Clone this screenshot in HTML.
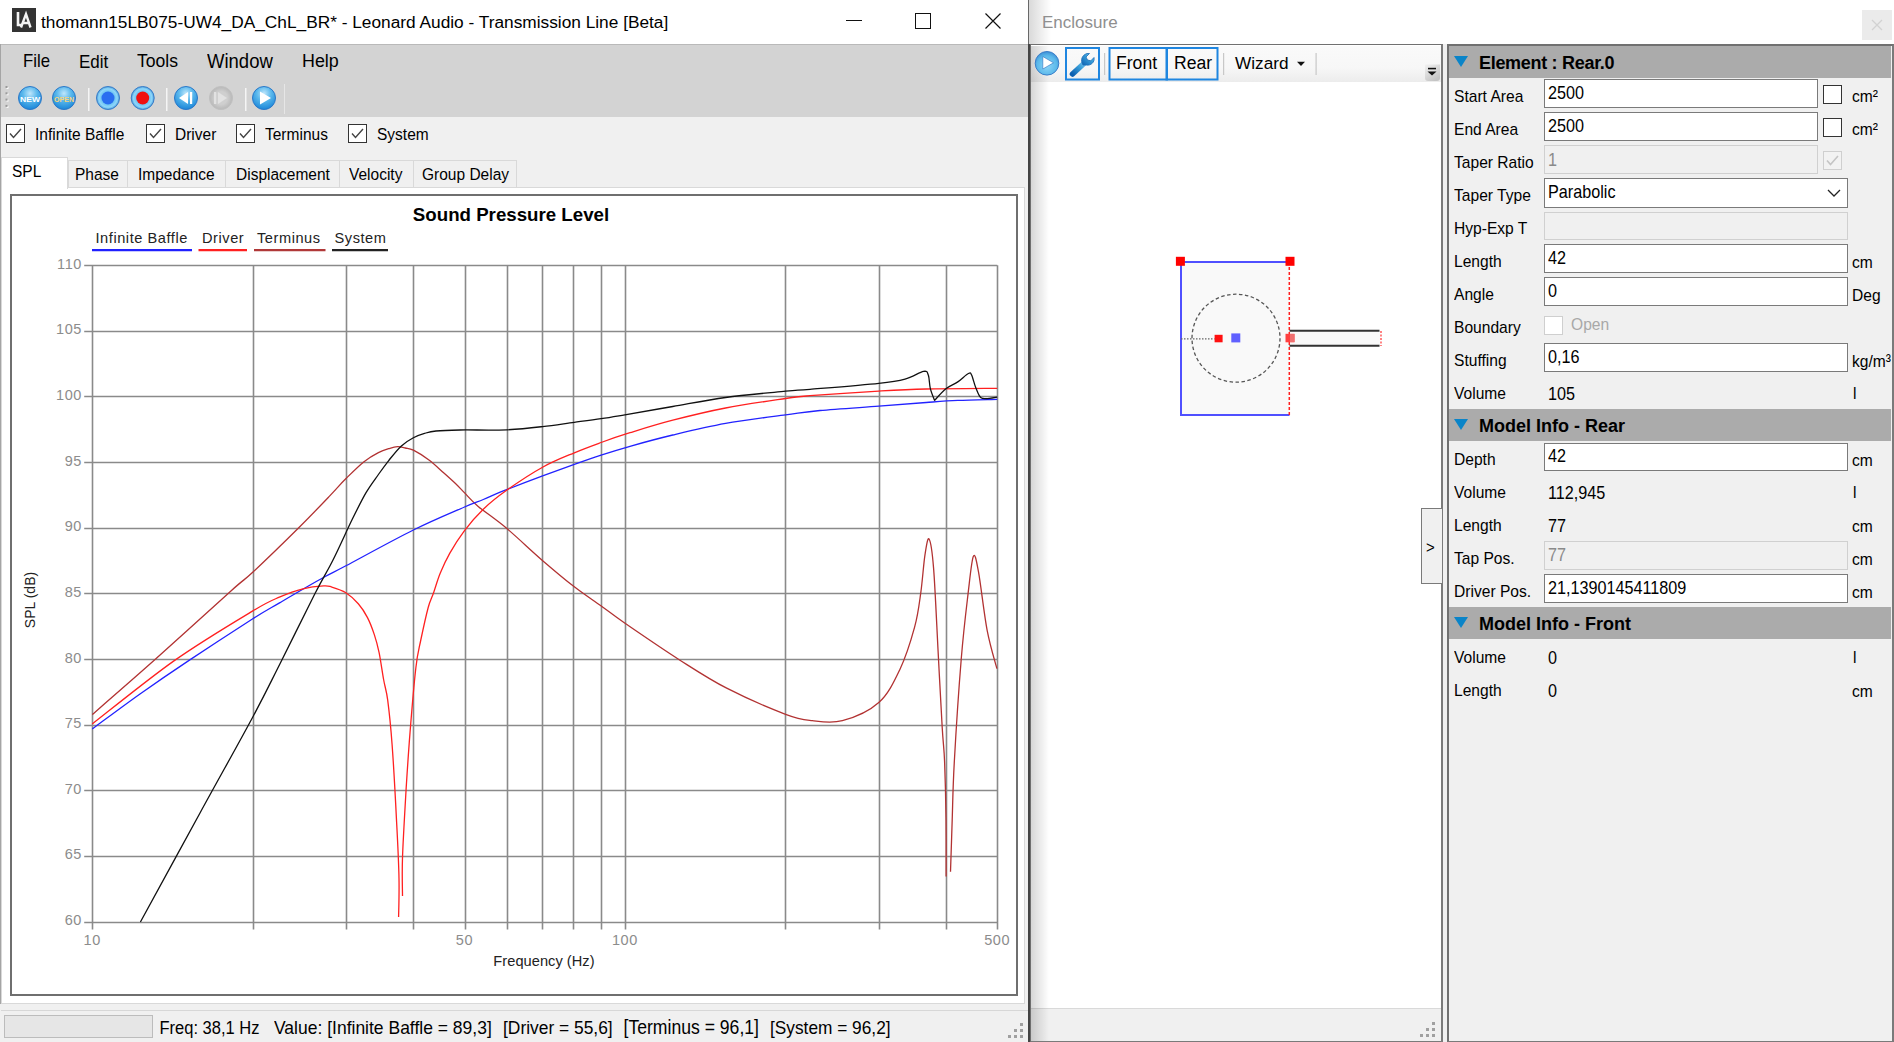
<!DOCTYPE html>
<html><head><meta charset="utf-8">
<style>
*{box-sizing:border-box;margin:0;padding:0}
html,body{width:1894px;height:1042px;overflow:hidden;background:#f0f0f0;font-family:"Liberation Sans",sans-serif;color:#000}
.a{position:absolute}
.t{position:absolute;white-space:pre;line-height:1}
.ui{font-size:15.5px;transform:scaleY(1.1);transform-origin:0 2px}
.sy{transform:scaleY(1.1);transform-origin:0 2px}
.cb{position:absolute;width:19px;height:19px;border:1.7px solid #333;background:#fff}
.cb svg{position:absolute;left:1px;top:1px}
.inp{position:absolute;background:#fff;border:1.5px solid #7a7a7a}
.dis{position:absolute;background:#f0f0f0;border:1.5px solid #d0d0d0}
.hdr{position:absolute;left:1449px;width:442px;height:32px;background:#ababab}
.hdr .tri{position:absolute;left:5px;top:10px;width:0;height:0;border-left:7.5px solid transparent;border-right:7.5px solid transparent;border-top:11px solid #0a84c8}
.hdr .ht{position:absolute;left:30px;top:8px;font-weight:bold;font-size:18px;white-space:pre;line-height:1}
.lbl{position:absolute;left:1454px;font-size:15.6px;white-space:pre;line-height:1;transform:scaleY(1.1);transform-origin:0 2px}
.unit{position:absolute;left:1852px;font-size:15.6px;white-space:pre;line-height:1;transform:scaleY(1.1);transform-origin:0 2px}
.val{position:absolute;left:1548px;font-size:16.2px;white-space:pre;line-height:1;transform:scaleY(1.1);transform-origin:0 2px}
</style></head><body>

<!-- ================= LEFT WINDOW ================= -->
<div class="a" style="left:0;top:0;width:1028px;height:44px;background:#fff"></div>
<div class="a" style="left:12px;top:8px;width:24px;height:24px;background:#333"></div>
<svg class="a" style="left:12px;top:8px" width="24" height="24"><path d="M6,4 L6,17 L10,17" stroke="#f4f4f4" stroke-width="2.6" fill="none"/><path d="M9,19.5 L14,6 L18.5,19.5 M11,15 L17,15" stroke="#f4f4f4" stroke-width="2.4" fill="none"/></svg>
<div class="t" style="left:41px;top:13.5px;font-size:17.3px">thomann15LB075-UW4_DA_ChL_BR* - Leonard Audio - Transmission Line [Beta]</div>
<div class="a" style="left:846px;top:20px;width:16px;height:1px;background:#111"></div>
<div class="a" style="left:915px;top:13px;width:16px;height:16px;border:1px solid #111"></div>
<svg class="a" style="left:984px;top:12px" width="18" height="18"><path d="M1.5,1.5 L16.5,16.5 M16.5,1.5 L1.5,16.5" stroke="#111" stroke-width="1.2"/></svg>

<!-- menu/toolbar -->
<div class="a" style="left:0;top:44px;width:1028px;height:73px;background:#d3d3d3;border-top:1px solid #b9b9b9"></div>
<div class="a" style="left:0;top:44px;width:1px;height:960px;background:#a5a5a5"></div>
<div class="t" style="left:23px;top:54.0px;font-size:16.8px;transform:scaleY(1.06);transform-origin:0 14.3px">File</div>
<div class="t" style="left:79px;top:53.8px;font-size:17.0px;transform:scaleY(1.06);transform-origin:0 14.4px">Edit</div>
<div class="t" style="left:137px;top:53.3px;font-size:17.6px;transform:scaleY(1.06);transform-origin:0 15.0px">Tools</div>
<div class="t" style="left:207px;top:52.5px;font-size:18.5px;transform:scaleY(1.06);transform-origin:0 15.7px">Window</div>
<div class="t" style="left:302px;top:53.0px;font-size:17.9px;transform:scaleY(1.06);transform-origin:0 15.2px">Help</div>

<svg class="a" style="left:0;top:80px" width="300" height="36">
 <defs>
  <radialGradient id="gb" cx="50%" cy="30%" r="70%"><stop offset="0" stop-color="#bfe6fb"/><stop offset="0.45" stop-color="#5ab8ec"/><stop offset="1" stop-color="#1a86d8"/></radialGradient>
  <radialGradient id="gr" cx="50%" cy="50%" r="50%"><stop offset="0.55" stop-color="#6cc4f2"/><stop offset="0.8" stop-color="#8fd6fa"/><stop offset="1" stop-color="#4aa0dc"/></radialGradient>
  <radialGradient id="gg" cx="50%" cy="50%" r="50%"><stop offset="0.55" stop-color="#cfcfcf"/><stop offset="1" stop-color="#b8b8b8"/></radialGradient>
 </defs>
 <g fill="#fbfbfb"><rect x="6.5" y="7" width="2" height="2"/><rect x="6.5" y="13.3" width="2" height="2"/><rect x="6.5" y="19.6" width="2" height="2"/><rect x="6.5" y="25.9" width="2" height="2"/></g><g fill="#9a9a9a"><rect x="5.5" y="6" width="2" height="2"/><rect x="5.5" y="12.3" width="2" height="2"/><rect x="5.5" y="18.6" width="2" height="2"/><rect x="5.5" y="24.9" width="2" height="2"/></g>
 <circle cx="30" cy="18" r="11.5" fill="url(#gb)" stroke="#2b78c8" stroke-width="1"/>
 <text x="30" y="21.5" font-size="8" font-weight="bold" textLength="20" lengthAdjust="spacingAndGlyphs" fill="#fff" text-anchor="middle" font-family="Liberation Sans">NEW</text>
 <circle cx="64" cy="18" r="11.5" fill="url(#gb)" stroke="#2b78c8" stroke-width="1"/>
 <text x="64" y="21.5" font-size="8" font-weight="bold" textLength="20" lengthAdjust="spacingAndGlyphs" fill="#f6d27a" text-anchor="middle" font-family="Liberation Sans">OPEN</text>
 <rect x="88" y="8" width="1.5" height="23" fill="#f5f5f5"/>
 <circle cx="108" cy="18" r="11.5" fill="url(#gr)" stroke="#3a7cc8" stroke-width="1"/>
 <circle cx="108" cy="18" r="6.5" fill="#2a6ef0"/>
 <circle cx="142.7" cy="18" r="11.5" fill="url(#gr)" stroke="#3a7cc8" stroke-width="1"/>
 <circle cx="142.7" cy="18" r="6.5" fill="#f01010"/>
 <rect x="166" y="8" width="1.5" height="23" fill="#f5f5f5"/>
 <circle cx="186" cy="18" r="11.5" fill="url(#gb)" stroke="#2b78c8" stroke-width="1"/>
 <path d="M179,18 L188,12 L188,24 Z" fill="#fff"/><rect x="190" y="12" width="2.2" height="12" fill="#fff"/>
 <circle cx="221" cy="18" r="11.5" fill="url(#gg)" stroke="#c0c0c0" stroke-width="1"/>
 <rect x="214" y="12" width="2.2" height="12" fill="#e2e2e2"/><path d="M218,12 L227,18 L218,24 Z" fill="#e2e2e2"/>
 <rect x="245" y="8" width="1.5" height="23" fill="#f5f5f5"/>
 <circle cx="264" cy="18" r="11.5" fill="url(#gb)" stroke="#2b78c8" stroke-width="1"/>
 <path d="M260,11.5 L271,18 L260,24.5 Z" fill="#fff"/>
 <rect x="284" y="4" width="1" height="30" fill="#e6e6e6"/>
</svg>

<!-- checkbox row -->
<div class="cb" style="left:6px;top:124px"><svg width="15" height="15"><path d="M2,7.5 L5.5,11.5 L13,3" stroke="#444" stroke-width="1.4" fill="none"/></svg></div>
<div class="t ui" style="left:35px;top:126px">Infinite Baffle</div>
<div class="cb" style="left:146px;top:124px"><svg width="15" height="15"><path d="M2,7.5 L5.5,11.5 L13,3" stroke="#444" stroke-width="1.4" fill="none"/></svg></div>
<div class="t ui" style="left:175px;top:126px">Driver</div>
<div class="cb" style="left:236px;top:124px"><svg width="15" height="15"><path d="M2,7.5 L5.5,11.5 L13,3" stroke="#444" stroke-width="1.4" fill="none"/></svg></div>
<div class="t ui" style="left:265px;top:126px">Terminus</div>
<div class="cb" style="left:348px;top:124px"><svg width="15" height="15"><path d="M2,7.5 L5.5,11.5 L13,3" stroke="#444" stroke-width="1.4" fill="none"/></svg></div>
<div class="t ui" style="left:377px;top:126px">System</div>

<!-- tabs -->
<div class="a" style="left:68px;top:160px;width:449px;height:28px;background:#f0f0f0;border:1px solid #d9d9d9;border-bottom:none"></div>
<div class="a" style="left:127px;top:161px;width:1px;height:27px;background:#d9d9d9"></div>
<div class="a" style="left:225px;top:161px;width:1px;height:27px;background:#d9d9d9"></div>
<div class="a" style="left:339px;top:161px;width:1px;height:27px;background:#d9d9d9"></div>
<div class="a" style="left:413px;top:161px;width:1px;height:27px;background:#d9d9d9"></div>
<div class="a" style="left:1px;top:187px;width:1024px;height:817px;background:#fff;border:1px solid #d9d9d9"></div>
<div class="a" style="left:1px;top:157px;width:67px;height:32px;background:#fff;border:1px solid #d9d9d9;border-bottom:none"></div>
<div class="t ui" style="left:12px;top:163px">SPL</div>
<div class="t ui" style="left:75px;top:165.5px">Phase</div>
<div class="t ui" style="left:138px;top:165.5px">Impedance</div>
<div class="t ui" style="left:236px;top:165.5px">Displacement</div>
<div class="t ui" style="left:349px;top:165.5px">Velocity</div>
<div class="t ui" style="left:422px;top:165.5px">Group Delay</div>

<!-- chart -->
<div class="a" style="left:10px;top:194px;width:1008px;height:802px;border:2px solid #6f6f6f;background:#fff"></div>
<svg class="a" style="left:0;top:0" width="1028" height="1004">
<text x="511" y="220.8" font-family="Liberation Sans" font-weight="bold" font-size="18.7" text-anchor="middle">Sound Pressure Level</text>
<g font-family="Liberation Sans" font-size="14.6" fill="#222" letter-spacing="0.55">
<text x="95.5" y="242.5">Infinite Baffle</text>
<text x="202" y="242.5">Driver</text>
<text x="257" y="242.5">Terminus</text>
<text x="334.5" y="242.5">System</text>
</g>
<g stroke-width="2.2">
<line x1="92" y1="250.2" x2="192" y2="250.2" stroke="#2020ff"/>
<line x1="198.5" y1="250.2" x2="247" y2="250.2" stroke="#ff2020"/>
<line x1="254" y1="250.2" x2="325.5" y2="250.2" stroke="#b03838"/>
<line x1="332" y1="250.2" x2="388" y2="250.2" stroke="#222"/>
</g>
<g stroke="#8a8a8a" stroke-width="1.6" fill="none"><line x1="92.5" y1="265.2" x2="92.5" y2="929.5" /><line x1="253.5" y1="265.2" x2="253.5" y2="929.5" /><line x1="346.5" y1="265.2" x2="346.5" y2="929.5" /><line x1="413.5" y1="265.2" x2="413.5" y2="929.5" /><line x1="465.5" y1="265.2" x2="465.5" y2="929.5" /><line x1="507.5" y1="265.2" x2="507.5" y2="929.5" /><line x1="542.5" y1="265.2" x2="542.5" y2="929.5" /><line x1="573.5" y1="265.2" x2="573.5" y2="929.5" /><line x1="601.5" y1="265.2" x2="601.5" y2="929.5" /><line x1="625.5" y1="265.2" x2="625.5" y2="929.5" /><line x1="785.5" y1="265.2" x2="785.5" y2="929.5" /><line x1="879.5" y1="265.2" x2="879.5" y2="929.5" /><line x1="946.5" y1="265.2" x2="946.5" y2="929.5" /><line x1="997.5" y1="265.2" x2="997.5" y2="929.5" /><line x1="84.2" y1="922.5" x2="997.2413213097973" y2="922.5" /><line x1="84.2" y1="856.5" x2="997.2413213097973" y2="856.5" /><line x1="84.2" y1="790.5" x2="997.2413213097973" y2="790.5" /><line x1="84.2" y1="725.5" x2="997.2413213097973" y2="725.5" /><line x1="84.2" y1="659.5" x2="997.2413213097973" y2="659.5" /><line x1="84.2" y1="593.5" x2="997.2413213097973" y2="593.5" /><line x1="84.2" y1="528.5" x2="997.2413213097973" y2="528.5" /><line x1="84.2" y1="462.5" x2="997.2413213097973" y2="462.5" /><line x1="84.2" y1="396.5" x2="997.2413213097973" y2="396.5" /><line x1="84.2" y1="331.5" x2="997.2413213097973" y2="331.5" /><line x1="84.2" y1="265.5" x2="997.2413213097973" y2="265.5" /></g><g font-family="Liberation Sans" font-size="14.5" fill="#8c8c8c" letter-spacing="0.6"><text x="82" y="925.0" text-anchor="end">60</text><text x="82" y="859.4" text-anchor="end">65</text><text x="82" y="793.7" text-anchor="end">70</text><text x="82" y="728.1" text-anchor="end">75</text><text x="82" y="662.5" text-anchor="end">80</text><text x="82" y="596.8" text-anchor="end">85</text><text x="82" y="531.2" text-anchor="end">90</text><text x="82" y="465.6" text-anchor="end">95</text><text x="82" y="400.0" text-anchor="end">100</text><text x="82" y="334.3" text-anchor="end">105</text><text x="82" y="268.7" text-anchor="end">110</text><text x="92.2" y="944.5" text-anchor="middle">10</text><text x="464.5" y="944.5" text-anchor="middle">50</text><text x="624.9" y="944.5" text-anchor="middle">100</text><text x="997.2" y="944.5" text-anchor="middle">500</text></g><g fill="none" stroke-width="1.3" stroke-linejoin="round"><path d="M92.2,714.6 C102.8,705.4 132.6,679.6 155.6,659.1 C178.6,638.6 214.2,605.9 230.4,591.4 C246.6,576.9 241.6,582.6 253.0,572.0 C264.4,561.4 286.2,540.2 299.0,527.5 C311.8,514.8 322.2,503.8 330.0,495.6 C337.8,487.4 340.3,484.1 346.0,478.5 C351.7,472.9 358.6,466.0 364.0,461.7 C369.4,457.4 374.1,454.8 378.4,452.6 C382.7,450.4 386.7,449.3 389.9,448.3 C393.1,447.3 395.0,446.8 397.6,446.7 C400.2,446.6 402.7,447.4 405.3,448.0 C407.9,448.6 409.4,448.1 413.4,450.2 C417.4,452.2 424.3,456.5 429.3,460.3 C434.3,464.1 439.3,469.0 443.6,472.8 C447.9,476.6 451.7,480.0 455.2,483.3 C458.7,486.6 460.8,489.0 464.6,492.9 C468.4,496.8 471.2,500.5 478.2,506.4 C485.2,512.3 495.9,519.3 506.6,528.3 C517.3,537.3 531.1,550.6 542.4,560.4 C553.7,570.1 564.5,579.2 574.3,586.8 C584.1,594.4 592.8,599.9 601.2,606.0 C609.7,612.1 612.0,614.3 625.0,623.3 C638.0,632.2 662.2,648.9 679.2,659.7 C696.2,670.5 709.0,679.1 726.7,688.2 C744.4,697.3 771.3,708.9 785.6,714.3 C799.9,719.7 802.8,719.6 812.3,720.7 C821.8,721.8 831.3,723.7 842.4,720.7 C853.5,717.7 869.2,711.1 878.8,702.5 C888.4,693.9 894.0,681.8 900.0,669.2 C906.0,656.7 911.1,640.0 914.6,627.2 C918.1,614.4 919.1,604.7 920.8,592.6 C922.5,580.5 923.6,563.5 925.0,554.6 C926.4,545.7 927.7,536.7 929.1,539.0 C930.5,541.3 932.1,549.7 933.6,568.4 C935.1,587.1 936.7,624.9 938.1,651.4 C939.5,677.9 941.1,709.1 942.2,727.5 C943.3,745.9 944.0,746.6 944.6,762.0 C945.2,777.4 945.8,800.9 946.0,820.0 C946.2,839.1 946.1,867.1 946.1,876.5 M950.5,871.8 C950.8,863.2 951.6,838.3 952.2,820.0 C952.8,801.7 952.8,789.0 954.3,762.0 C955.8,735.0 959.0,686.5 961.3,658.3 C963.6,630.1 966.2,609.6 968.2,592.6 C970.2,575.6 971.7,559.8 973.4,556.3 C975.1,552.8 976.2,559.5 978.5,571.9 C980.8,584.3 984.1,614.5 987.2,630.6 C990.3,646.7 995.3,662.4 996.9,668.7" stroke="#b23232"/><path d="M92.2,729.0 C100.2,723.2 123.9,705.4 140.0,694.0 C156.1,682.6 169.9,673.1 188.7,660.6 C207.5,648.1 237.6,628.5 252.8,618.8 C268.0,609.1 268.2,609.5 280.0,602.6 C291.8,595.7 312.8,583.4 323.8,577.3 C334.8,571.2 331.0,573.7 345.9,565.8 C360.8,557.9 393.6,539.8 413.4,530.0 C433.2,520.2 452.9,512.1 464.5,507.0 C476.1,501.9 476.3,502.4 483.3,499.5 C490.3,496.6 496.7,493.6 506.6,489.7 C516.5,485.8 531.3,480.1 542.6,475.9 C553.9,471.7 564.5,467.9 574.3,464.4 C584.0,460.9 591.8,458.1 601.1,455.1 C610.4,452.1 618.0,449.7 630.0,446.3 C642.0,442.9 656.9,438.8 672.8,435.0 C688.7,431.2 706.8,426.8 725.6,423.4 C744.4,420.0 769.9,417.0 785.6,414.9 C801.3,412.8 804.5,411.9 820.0,410.5 C835.5,409.1 861.1,407.5 878.8,406.2 C896.5,404.9 913.0,403.5 926.2,402.5 C939.4,401.5 946.0,400.9 957.8,400.4 C969.6,399.9 990.6,399.5 997.2,399.3" stroke="#2222ff"/><path d="M92.2,724.0 C105.9,713.4 147.5,679.5 174.3,660.6 C201.1,641.8 235.2,621.5 252.8,610.9 C270.4,600.3 271.6,600.6 280.0,596.9 C288.4,593.2 295.7,590.6 303.0,588.8 C310.3,587.0 319.0,586.2 323.8,585.9 C328.6,585.6 328.1,586.0 331.8,587.1 C335.5,588.2 341.5,590.0 345.9,592.8 C350.3,595.6 354.7,599.7 358.3,603.8 C361.9,607.9 364.8,612.4 367.5,617.6 C370.2,622.8 372.5,629.1 374.4,634.9 C376.3,640.6 377.4,644.6 379.0,652.1 C380.6,659.6 382.2,672.0 383.7,680.0 C385.1,688.0 386.3,689.4 387.7,700.2 C389.1,711.0 390.6,724.4 392.1,744.7 C393.6,765.0 395.5,799.7 396.6,822.0 C397.8,844.3 398.7,862.6 399.0,878.4 C399.3,894.2 398.7,910.6 398.6,917.0 M402.5,896.0 C402.5,889.6 401.9,875.4 402.5,857.6 C403.1,839.8 404.9,810.1 406.1,789.3 C407.4,768.5 408.4,753.2 410.0,732.9 C411.6,712.6 414.1,683.0 415.9,667.5 C417.7,652.0 418.8,650.0 420.8,640.0 C422.9,630.0 426.1,615.4 428.2,607.5 C430.3,599.6 431.6,598.5 433.6,592.7 C435.6,587.0 437.6,579.5 440.3,573.0 C443.0,566.5 445.7,560.5 449.7,553.4 C453.7,546.3 458.9,538.0 464.5,530.6 C470.1,523.2 476.3,515.9 483.3,509.2 C490.3,502.5 496.7,497.3 506.6,490.3 C516.5,483.3 531.3,473.4 542.6,467.2 C553.9,460.9 564.5,456.9 574.3,452.8 C584.0,448.7 591.8,445.9 601.1,442.5 C610.4,439.1 618.0,436.4 630.0,432.7 C642.0,429.0 656.9,424.3 672.8,420.2 C688.7,416.1 706.8,411.6 725.6,408.0 C744.4,404.4 771.5,400.6 785.6,398.5 C799.7,396.4 794.5,396.9 810.0,395.7 C825.5,394.5 859.4,392.2 878.8,391.1 C898.2,390.0 906.5,389.5 926.2,389.0 C945.9,388.5 985.4,388.4 997.2,388.3" stroke="#ff2020"/><path d="M140.4,922.0 C150.3,903.8 181.3,847.2 200.0,813.0 C218.7,778.8 239.5,741.9 252.8,717.0 C266.1,692.1 269.7,684.1 280.0,663.7 C290.3,643.3 305.7,611.8 314.5,594.5 C323.3,577.2 326.7,572.6 333.0,560.0 C339.3,547.4 347.0,530.0 352.5,518.8 C358.0,507.6 361.6,500.3 365.9,492.9 C370.2,485.5 374.6,479.9 378.4,474.5 C382.2,469.1 385.1,465.1 388.9,460.3 C392.7,455.5 397.3,449.6 401.4,445.9 C405.5,442.1 409.5,439.9 413.4,437.8 C417.2,435.7 420.7,434.5 424.5,433.4 C428.3,432.3 430.1,431.6 436.0,431.0 C441.9,430.4 448.2,430.2 460.0,430.0 C471.8,429.8 492.8,430.4 506.6,429.8 C520.4,429.2 531.3,427.9 542.6,426.6 C553.9,425.4 564.5,423.6 574.3,422.3 C584.0,421.0 592.7,419.9 601.1,418.6 C609.5,417.4 612.8,416.8 624.8,414.8 C636.7,412.8 656.0,409.4 672.8,406.5 C689.6,403.6 706.8,400.1 725.6,397.5 C744.4,394.9 771.5,392.6 785.6,391.2 C799.7,389.8 794.5,390.6 810.0,389.3 C825.5,388.0 863.0,385.0 878.8,383.3 C894.6,381.6 897.5,381.1 905.0,379.1 C912.5,377.1 919.6,372.1 923.5,371.4 C927.4,370.7 927.1,372.1 928.3,375.0 C929.4,377.9 929.3,384.6 930.4,388.8 C931.5,393.0 933.9,398.5 934.6,400.4 L934.6,400.4 C936.5,398.4 942.3,391.7 946.2,388.6 C950.1,385.5 954.1,384.4 957.8,381.9 C961.5,379.4 966.1,374.6 968.4,373.5 C970.7,372.4 970.4,372.6 971.6,375.0 C972.8,377.4 974.2,383.9 975.8,387.7 C977.4,391.5 978.7,396.0 981.0,397.8 C983.3,399.6 986.8,398.4 989.5,398.3 C992.2,398.2 995.9,397.4 997.2,397.2" stroke="#111"/></g>
<text transform="translate(35,600) rotate(-90)" font-family="Liberation Sans" font-size="14" fill="#222" text-anchor="middle" letter-spacing="0">SPL (dB)</text>
<text x="544" y="966" font-family="Liberation Sans" font-size="14.6" fill="#222" text-anchor="middle" letter-spacing="0.05">Frequency (Hz)</text>
</svg>

<!-- status bar -->
<div class="a" style="left:1px;top:1010px;width:1027px;height:1px;background:#d7d7d7"></div>
<div class="a" style="left:4px;top:1015px;width:149px;height:23px;background:#e6e6e6;border:1px solid #bcbcbc"></div>
<div class="t sy" style="left:159.5px;top:1019px;font-size:16.5px">Freq: 38,1 Hz</div><div class="t sy" style="left:274px;top:1019px;font-size:17.5px">Value: [Infinite Baffle = 89,3]</div><div class="t sy" style="left:503px;top:1019px;font-size:17.4px">[Driver = 55,6]</div><div class="t sy" style="left:623.5px;top:1019px;font-size:17.6px">[Terminus = 96,1]</div><div class="t sy" style="left:770px;top:1019px;font-size:17.3px">[System = 96,2]</div>
<svg class="a" style="left:1008px;top:1022px" width="18" height="18" fill="#a0a0a0"><rect x="12" y="1" width="3" height="3"/><rect x="6" y="7" width="3" height="3"/><rect x="12" y="7" width="3" height="3"/><rect x="0" y="13" width="3" height="3"/><rect x="6" y="13" width="3" height="3"/><rect x="12" y="13" width="3" height="3"/></svg>

<!-- window divider -->
<div class="a" style="left:1028px;top:0;width:1.2px;height:44px;background:#686868"></div><div class="a" style="left:1028px;top:44px;width:1.5px;height:998px;background:#444"></div><div class="a" style="left:1029.5px;top:44px;width:1.5px;height:998px;background:#6e6e6e"></div>

<!-- ================= RIGHT WINDOW ================= -->
<div class="a" style="left:1029px;top:0;width:865px;height:44px;background:#fff"></div><div class="a" style="left:1029px;top:0;width:22px;height:44px;background:linear-gradient(90deg,rgba(0,0,0,0.15),rgba(0,0,0,0))"></div>
<div class="t" style="left:1042px;top:13.5px;font-size:17px;color:#8f8f8f">Enclosure</div>
<div class="a" style="left:1862px;top:10px;width:30px;height:30px;background:#ebebeb"></div>
<svg class="a" style="left:1871px;top:19px" width="12" height="12"><path d="M1,1 L11,11 M11,1 L1,11" stroke="#d2d2d2" stroke-width="1.3"/></svg>

<!-- drawing panel -->
<div class="a" style="left:1031px;top:44px;width:412px;height:998px;background:#fff;border-top:1.5px solid #707070;border-right:2px solid #7a7a7a;border-bottom:1.5px solid #7a7a7a"></div>
<div class="a" style="left:1031px;top:46px;width:410px;height:36px;background:linear-gradient(#fafafa,#f7f7f7 60%,#ececec)"></div>
<div class="a" style="left:1031px;top:1008px;width:410px;height:33px;background:#f0f0f0;border-top:1px solid #d9d9d9"></div>
<div class="a" style="left:1031px;top:46px;width:18px;height:995px;background:linear-gradient(90deg,rgba(0,0,0,0.16),rgba(0,0,0,0))"></div>
<!-- toolbar icons -->
<svg class="a" style="left:1031px;top:46px" width="412" height="36">
 <defs>
  <radialGradient id="gp" cx="50%" cy="60%" r="60%"><stop offset="0" stop-color="#8fd6f8"/><stop offset="0.7" stop-color="#5ab8ea"/><stop offset="1" stop-color="#3d8fd6"/></radialGradient>
  <linearGradient id="gov" x1="0" y1="0" x2="0.6" y2="1"><stop offset="0" stop-color="#f2f2f2"/><stop offset="1" stop-color="#c4c4c4"/></linearGradient>
  <linearGradient id="gw" x1="0" y1="1" x2="1" y2="0"><stop offset="0" stop-color="#0b5fb0"/><stop offset="0.6" stop-color="#3aa0da"/><stop offset="1" stop-color="#7cc4ea"/></linearGradient>
 </defs>
 <circle cx="16" cy="17.3" r="11.8" fill="url(#gp)" stroke="#3a7ec8" stroke-width="1"/>
 <path d="M11.8,10.5 L22.5,16.8 L11.8,23 Z" fill="#fff" stroke="#2a70c0" stroke-width="0.6"/>
 <rect x="35" y="2" width="33" height="31.5" fill="none" stroke="#1f86e0" stroke-width="2"/>
 <path d="M41.5,28 L54,16.5" stroke="url(#gw)" stroke-width="5.5" stroke-linecap="round"/>
 <path d="M52,19 C49,14 51,9 56,7.5 L58.5,7.5 L55,11 L56.5,14 L59.8,14.8 L63,11.5 C64,16 60,20 55,19 Z" fill="url(#gw)" stroke="#1c6cb8" stroke-width="0.8"/>
 <rect x="73" y="7" width="1.2" height="22" fill="#c8c8c8"/>
 <rect x="78.5" y="2" width="57.5" height="31.5" fill="none" stroke="#1f86e0" stroke-width="2"/>
 <rect x="135.5" y="2" width="51" height="31.5" fill="none" stroke="#1f86e0" stroke-width="2"/>
 <rect x="192" y="7" width="1.2" height="22" fill="#c8c8c8"/>
 <path d="M266,15.8 L274,15.8 L270,20 Z" fill="#111"/>
 <rect x="284.5" y="7" width="1.2" height="22" fill="#c8c8c8"/>
 <path d="M394,18.5 L409,18.5 L409,32 Q409,35 406,35 L397,35 Q394,35 394,32 Z" fill="url(#gov)"/>
 <rect x="397" y="22.6" width="8" height="1.6" fill="#fff" opacity="0.7"/><rect x="397" y="21.8" width="8" height="1.6" fill="#111"/>
 <path d="M396.5,25.5 L405.5,25.5 L401,29.5 Z" fill="#111"/>
</svg>
<div class="t" style="left:1116px;top:55px;font-size:17.6px">Front</div>
<div class="t" style="left:1174px;top:55px;font-size:17.6px">Rear</div>
<div class="t" style="left:1235px;top:55px;font-size:17.2px">Wizard</div>

<!-- enclosure drawing -->
<svg class="a" style="left:1150px;top:240px" width="250" height="190">
 <rect x="31" y="22" width="108.5" height="153" fill="#f9f9f9"/>
 <path d="M31,22 L139.5,22 M31,22 L31,175 L139.5,175" stroke="#5050ff" stroke-width="2" fill="none"/>
 <line x1="139.3" y1="22" x2="139.3" y2="175" stroke="#ff2020" stroke-width="1.5" stroke-dasharray="3,2"/>
 <circle cx="86" cy="98.2" r="44" fill="none" stroke="#555" stroke-width="1.3" stroke-dasharray="3.5,2.5"/>
 <line x1="31" y1="98.8" x2="64.6" y2="98.8" stroke="#666" stroke-width="1.2" stroke-dasharray="1.5,1.5"/>
 <rect x="64.6" y="94.8" width="8" height="7.5" fill="#ff1010"/>
 <rect x="81.3" y="93.4" width="9" height="9" fill="#6060ff"/>
 <rect x="140" y="91" width="90" height="15" fill="#f9f9f9"/>
 <path d="M139.5,90.8 L229.5,90.8 M139.5,105.8 L229.5,105.8" stroke="#333" stroke-width="2"/>
 <line x1="231" y1="91" x2="231" y2="106" stroke="#ff3030" stroke-width="1.2" stroke-dasharray="2,1.5"/>
 <rect x="25.9" y="16.8" width="9" height="9" fill="#ff0000"/>
 <rect x="135.5" y="16.8" width="9" height="9" fill="#ff0000"/>
 <rect x="135.5" y="93.8" width="9" height="8.5" fill="#ff4040"/>
 <rect x="140" y="94" width="4.5" height="8" fill="#f07070"/>
</svg>

<!-- splitter tab -->
<div class="a" style="left:1420.5px;top:507.5px;width:22.5px;height:76px;background:#f0f0f0;border:1.3px solid #7a7a7a"></div>
<div class="t" style="left:1426px;top:539px;font-size:15px;transform:scaleY(1.1)">&gt;</div>
<svg class="a" style="left:1414px;top:1020px" width="24" height="20" fill="#a0a0a0"><rect x="18" y="2" width="3" height="3"/><rect x="12" y="8" width="3" height="3"/><rect x="18" y="8" width="3" height="3"/><rect x="6" y="14" width="3" height="3"/><rect x="12" y="14" width="3" height="3"/><rect x="18" y="14" width="3" height="3"/></svg>

<!-- properties panel -->
<div class="a" style="left:1447px;top:44px;width:447px;height:998px;background:#f0f0f0;border-left:2px solid #707070;border-top:2px solid #707070;border-right:2.5px solid #7a7a7a;border-bottom:1.5px solid #7a7a7a"></div>

<div class="hdr" style="top:46px"><div class="tri"></div><div class="ht" style="letter-spacing:-0.3px">Element : Rear.0</div></div>
<div class="lbl" style="top:88px">Start Area</div>
<div class="inp" style="left:1543.5px;top:78.5px;width:274px;height:29.5px"></div><div class="val" style="top:84px">2500</div>
<div class="cb" style="left:1823px;top:85px;border:1.5px solid #333"></div><div class="unit" style="top:88px">cm²</div>
<div class="lbl" style="top:121px">End Area</div>
<div class="inp" style="left:1543.5px;top:111.5px;width:274px;height:29.5px"></div><div class="val" style="top:117px">2500</div>
<div class="cb" style="left:1823px;top:118px;border:1.5px solid #333"></div><div class="unit" style="top:121px">cm²</div>
<div class="lbl" style="top:154px">Taper Ratio</div>
<div class="dis" style="left:1543.5px;top:145px;width:274px;height:28.5px"></div><div class="val" style="top:150.5px;color:#8a8a8a">1</div>
<div class="cb" style="left:1823px;top:151px;border:1.5px solid #cfcfcf;background:#f2f2f2"><svg width="15" height="15"><path d="M2,7.5 L5.5,11.5 L13,3" stroke="#c4c4c4" stroke-width="1.6" fill="none"/></svg></div>
<div class="lbl" style="top:187px">Taper Type</div>
<div class="inp" style="left:1543.5px;top:178px;width:304px;height:30px"></div><div class="val" style="top:183px">Parabolic</div>
<svg class="a" style="left:1826px;top:187px" width="16" height="12"><path d="M2,3 L8,9 L14,3" stroke="#222" stroke-width="1.3" fill="none"/></svg>
<div class="lbl" style="top:220px">Hyp-Exp T</div>
<div class="dis" style="left:1543.5px;top:211.5px;width:304px;height:28px"></div>
<div class="lbl" style="top:253px">Length</div>
<div class="inp" style="left:1543.5px;top:244px;width:304px;height:28.5px"></div><div class="val" style="top:249px">42</div><div class="unit" style="top:254px">cm</div>
<div class="lbl" style="top:286px">Angle</div>
<div class="inp" style="left:1543.5px;top:277px;width:304px;height:28.5px"></div><div class="val" style="top:282px">0</div><div class="unit" style="top:287px">Deg</div>
<div class="lbl" style="top:319px">Boundary</div>
<div class="cb" style="left:1543.5px;top:316px;border:1.5px solid #cfcfcf;background:#fff"></div><div class="t" style="left:1571px;top:317px;font-size:15.6px;color:#a8a8a8">Open</div>
<div class="lbl" style="top:352px">Stuffing</div>
<div class="inp" style="left:1543.5px;top:343px;width:304px;height:28.5px"></div><div class="val" style="top:348px">0,16</div><div class="unit" style="top:353px">kg/m³</div>
<div class="lbl" style="top:385px">Volume</div><div class="val" style="top:385px">105</div><div class="unit" style="top:385px;left:1853px">l</div>

<div class="hdr" style="top:409px"><div class="tri"></div><div class="ht">Model Info - Rear</div></div>
<div class="lbl" style="top:451px">Depth</div>
<div class="inp" style="left:1543.5px;top:442.5px;width:304px;height:28.5px"></div><div class="val" style="top:447px">42</div><div class="unit" style="top:452px">cm</div>
<div class="lbl" style="top:484px">Volume</div><div class="val" style="top:484px">112,945</div><div class="unit" style="top:484px;left:1853px">l</div>
<div class="lbl" style="top:517px">Length</div><div class="val" style="top:517px">77</div><div class="unit" style="top:518px">cm</div>
<div class="lbl" style="top:550px">Tap Pos.</div>
<div class="dis" style="left:1543.5px;top:541px;width:304px;height:28.5px"></div><div class="val" style="top:546px;color:#8a8a8a">77</div><div class="unit" style="top:551px">cm</div>
<div class="lbl" style="top:583px">Driver Pos.</div>
<div class="inp" style="left:1543.5px;top:574px;width:304px;height:29px"></div><div class="val" style="top:579px">21,1390145411809</div><div class="unit" style="top:584px">cm</div>

<div class="hdr" style="top:607px"><div class="tri"></div><div class="ht">Model Info - Front</div></div>
<div class="lbl" style="top:649px">Volume</div><div class="val" style="top:649px">0</div><div class="unit" style="top:649px;left:1853px">l</div>
<div class="lbl" style="top:682px">Length</div><div class="val" style="top:682px">0</div><div class="unit" style="top:683px">cm</div>

</body></html>
